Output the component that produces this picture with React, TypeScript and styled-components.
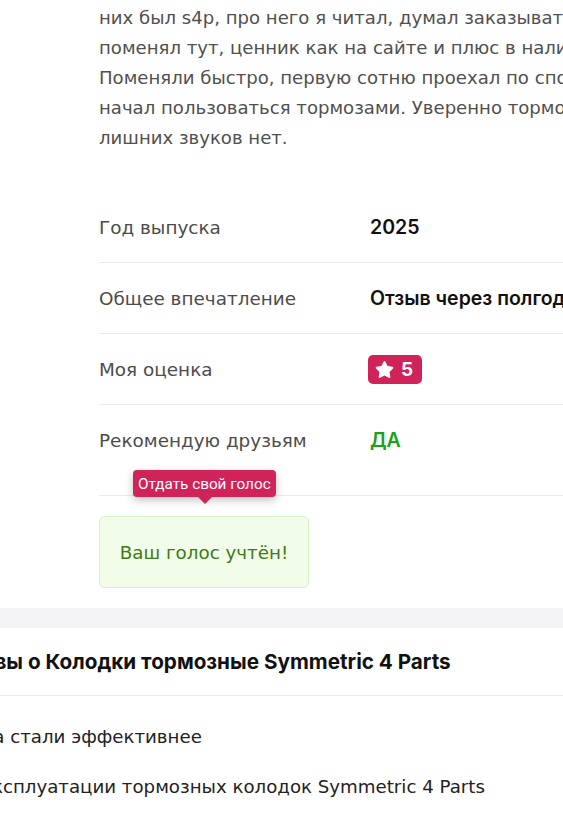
import React from 'react'
import styled, { createGlobalStyle } from 'styled-components'
import { FaStar } from 'react-icons/fa'

const GlobalStyle = createGlobalStyle`
  html, body {
    margin: 0;
    padding: 0;
    background: #fff;
    overflow-x: hidden;
  }
`

const wide = `'DejaVu Sans', 'Open Sans', sans-serif`

const reviewLines = [
  'них был s4p, про него я читал, думал заказывать, но',
  'поменял тут, ценник как на сайте и плюс в наличии.',
  'Поменяли быстро, первую сотню проехал по спокойному,',
  'начал пользоваться тормозами. Уверенно тормозят,',
  'лишних звуков нет.',
]

export default function App() {
  return (
    <Page>
      <GlobalStyle />
      <Review>
        <ReviewText>
          {reviewLines.map((line, i) => (
            <span key={i}>
              {line}
              {i < reviewLines.length - 1 && <br />}
            </span>
          ))}
        </ReviewText>

        <Specs>
          <SpecRow>
            <Label>Год выпуска</Label>
            <Value>2025</Value>
          </SpecRow>
          <SpecRow>
            <Label>Общее впечатление</Label>
            <Value>Отзыв через полгода эксплуатации</Value>
          </SpecRow>
          <SpecRow>
            <Label>Моя оценка</Label>
            <Value>
              <Rating>
                <FaStar size={19} />
                5
              </Rating>
            </Value>
          </SpecRow>
          <SpecRow $last>
            <Label>Рекомендую друзьям</Label>
            <Value $green>ДА</Value>
          </SpecRow>
        </Specs>

        <Vote>
          <Tooltip>Отдать свой голос</Tooltip>
          <VoteDone>Ваш голос учтён!</VoteDone>
        </Vote>
      </Review>

      <Band />

      <Other>
        <OtherTitle>Отзывы о Колодки тормозные Symmetric 4 Parts</OtherTitle>
        <OtherList>
          <OtherItem>Тормоза стали эффективнее</OtherItem>
          <OtherItem>Опыт эксплуатации тормозных колодок Symmetric 4 Parts</OtherItem>
        </OtherList>
      </Other>
    </Page>
  )
}

const Page = styled.div`
  width: 563px;
  overflow: hidden;
  background: #fff;
`

const Review = styled.div`
  padding: 3px 0 0 99px;
  width: 900px;
`

const ReviewText = styled.p`
  margin: 0;
  font-family: ${wide};
  font-size: 18.1px;
  line-height: 30px;
  color: #505050;
  white-space: nowrap;
`

const Specs = styled.div`
  margin-top: 39px;
`

const SpecRow = styled.div<{ $last?: boolean }>`
  display: grid;
  grid-template-columns: 271px 1fr;
  align-items: center;
  height: 70px;
  border-bottom: ${p => (p.$last ? 'none' : '1px solid #ebebeb')};
`

const Label = styled.div`
  font-family: ${wide};
  font-size: 18.4px;
  color: #4c4c4c;
`

const Value = styled.div<{ $green?: boolean }>`
  font-family: Inter, 'Liberation Sans', sans-serif;
  font-size: 19.5px;
  font-weight: 600;
  color: ${p => (p.$green ? '#19a319' : '#111')};
  white-space: nowrap;
`

const Rating = styled.span`
  display: inline-flex;
  align-items: center;
  gap: 7px;
  height: 29px;
  padding: 0 9px 0 7px;
  margin-left: -2px;
  border-radius: 5px;
  background: #d0235a;
  color: #fff;
  font-size: 19px;
  font-weight: 700;
`

const Vote = styled.div`
  position: relative;
  margin-top: 20px;
  padding-top: 20px;
  border-top: 1px solid #ebebeb;
`

const Tooltip = styled.div`
  position: absolute;
  top: -26px;
  left: 34px;
  height: 27px;
  padding: 0 5px;
  display: flex;
  align-items: center;
  border-radius: 4px;
  background: #d0235a;
  color: #fff;
  font-family: Roboto, 'Liberation Sans', sans-serif;
  font-size: 15.3px;
  box-shadow: 0 3px 8px rgba(0, 0, 0, 0.25);

  &::after {
    content: '';
    position: absolute;
    left: 65px;
    bottom: -7px;
    border-left: 7px solid transparent;
    border-right: 7px solid transparent;
    border-top: 7px solid #d0235a;
  }
`

const VoteDone = styled.div`
  box-sizing: border-box;
  width: 210px;
  height: 72px;
  display: flex;
  align-items: center;
  justify-content: center;
  border: 1px solid #d8f1c6;
  border-radius: 6px;
  background: #f1fde9;
  color: #3e7b12;
  font-family: ${wide};
  font-size: 18.3px;
`

const Band = styled.div`
  height: 20px;
  margin-top: 20px;
  background: #f4f4f6;
`

const Other = styled.div`
  margin-left: -75px;
  width: 900px;
`

const OtherTitle = styled.h2`
  margin: 0;
  padding: 20px 0 19px 16px;
  border-bottom: 1px solid #ebebeb;
  font-family: Inter, sans-serif;
  font-size: 20.7px;
  line-height: 28px;
  font-weight: 700;
  color: #111;
`

const OtherList = styled.ul`
  list-style: none;
  margin: 0;
  padding: 15px 0 0;
`

const OtherItem = styled.li`
  height: 50px;
  display: flex;
  align-items: center;
  font-family: ${wide};
  font-size: 18.2px;
  color: #222;
`
